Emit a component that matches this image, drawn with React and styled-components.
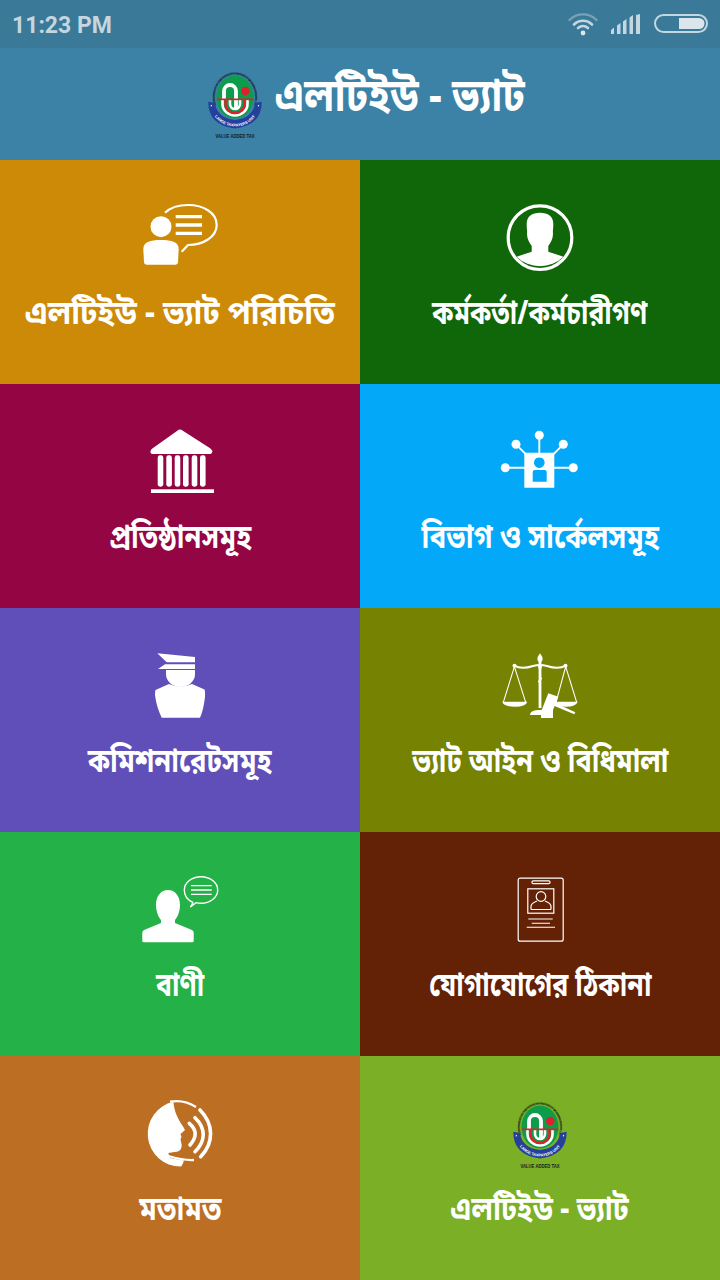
import React from 'react';
import styled, { createGlobalStyle } from 'styled-components';

const Global = createGlobalStyle`
  html, body { margin: 0; padding: 0; background: #3b82a6; }
  #root { width: 720px; height: 1280px; overflow: hidden; }
`;

const Page = styled.div`
  width: 720px;
  height: 1280px;
  display: flex;
  flex-direction: column;
  font-family: "Noto Sans Bengali", "Noto Serif Bengali", "Lohit Bengali", "Noto Sans", "Liberation Sans", sans-serif;
`;
const StatusBar = styled.div`
  height: 48px;
  flex: none;
  background: #3a7997;
  display: flex;
  align-items: center;
  justify-content: space-between;
  padding: 0 12px;
`;
const Time = styled.span`
  font: 700 23px/1 Roboto, sans-serif;
  color: #c4d6df;
  margin-top: 2px;
`;
const StatusIcons = styled.div`
  display: flex;
  align-items: center;
  gap: 13px;
`;
const AppBar = styled.header`
  height: 112px;
  flex: none;
  background: #3b82a6;
  display: flex;
  align-items: center;
  justify-content: center;
  gap: 10px;
  padding-left: 13px;
`;
const AppLogo = styled.div`
  display: flex;
  margin-top: 2px;
`;
const AppTitle = styled.h1`
  margin: 0 0 8px;
  width: 251px;
  font-size: 46px;
  line-height: 56px;
  font-weight: 700;
  color: #fff;
  white-space: nowrap;
  transform: scaleX(.865);
  transform-origin: left center;
`;
const Grid = styled.main`
  flex: 1;
  display: grid;
  grid-template-columns: 360px 360px;
  grid-auto-rows: 224px;
`;
const Tile = styled.a`
  background: ${p => p.$bg};
  display: flex;
  flex-direction: column;
  align-items: center;
  padding-top: 42px;
  box-sizing: border-box;
  color: #fff;
`;
const TileIcon = styled.svg`
  width: 80px;
  height: 70px;
  flex: none;
  display: block;
`;
const TileLabel = styled.span`
  margin-top: 22px;
  font-size: 33px;
  line-height: 44px;
  font-weight: 700;
  white-space: nowrap;
  transform: scaleX(${p => p.$fit});
`;

const Logo = ({ id }) => (
  <svg width="58" height="68" viewBox="0 0 58 68">
    <defs>
      <path id={id} d="M8.800 34 A20.500 22.500 0 1 1 47.200 34" />
      <path id={`${id}b`} d="M4 38 Q10 54.500 28 55.500 Q46 54.500 52 38" />
    </defs>
    <path d="M8.200 34 A21 24 0 1 1 47.800 34" fill="none" stroke="#10131f" strokeOpacity=".3" strokeWidth="2.200" />
    <text fontFamily="Liberation Sans, sans-serif" fontSize="2.400" fontWeight="700" fill="#10131f" letterSpacing=".08">
      <textPath href={`#${id}`}>GOVERNMENT OF THE PEOPLE'S REPUBLIC OF BANGLADESH</textPath>
    </text>
    <ellipse cx="28" cy="26" rx="18.500" ry="21.500" fill="#0c9c4a" />
    <path d="M15.500 28 V33 a12.500 11.500 0 0 0 25 0 V28" fill="none" stroke="#fff" strokeWidth="2.600" />
    <path d="M18.500 28 V33 a9.500 9 0 0 0 19 0 V28" fill="none" stroke="#e0212d" strokeWidth="2.400" />
    <path d="M23 28 V33 a5 5 0 0 0 10 0 V28" fill="none" stroke="#fff" strokeWidth="2.600" />
    <path d="M17 28 V20 a6 6 0 0 1 12 0 V37" fill="none" stroke="#fff" strokeWidth="3.800" />
    <circle cx="38.300" cy="20" r="4.300" fill="#e0212d" />
    <rect x="9.700" y="27.500" width="36.600" height="1.700" fill="#e0212d" />
    <path d="M1.300 30.700 L8 32 Q10 47 28 49 Q46 47 48 32 L54.700 30.700 Q55 54 28 57.500 Q1 54 1.300 30.700 Z" fill="#25409b" />
    <path d="M3.800 34.500l1 .4M51 34.500l1 .4" stroke="#fff" strokeWidth="1.500" />
    <text fontFamily="Liberation Sans, sans-serif" fontSize="3.800" fontWeight="700" fill="#fff" textAnchor="middle">
      <textPath href={`#${id}b`} startOffset="50%">LARGE TAXPAYERS UNIT</textPath>
    </text>
    <text x="28" y="67" textAnchor="middle" fontFamily="Liberation Sans, sans-serif" fontSize="5.200" fontWeight="700" fill="#141a20" textLength="39" lengthAdjust="spacingAndGlyphs">VALUE ADDED TAX</text>
  </svg>
);

const Speaker = () => (
  <TileIcon viewBox="0 0 80 70" fill="#fff">
    <circle cx="21" cy="24.700" r="10.500" />
    <path d="M3.300 47 C3.300 40 10 38 21 38 C32 38 38.700 40 38.700 47 L38 60 Q37.800 62.700 35 62.700 H7 Q4.200 62.700 4 60 Z" />
    <path d="M25 10.700 C31 5 40 3 48 3 C64 3 76.700 11 76.700 23 C76.700 35 63 43 48 43 L41.700 49.700" fill="none" stroke="#fff" strokeWidth="2.200" />
    <path d="M35.700 13h26.300v3.300H35.700zM35.700 21.300h26.300v3.400H35.700zM35.700 29.700h26.300V33H35.700z" />
  </TileIcon>
);
const Officer = () => (
  <TileIcon viewBox="0 0 80 70" fill="#fff">
    <circle cx="40" cy="35.700" r="31.800" fill="none" stroke="#fff" strokeWidth="3.200" />
    <path d="M26.700 22 C26.700 14 32 10.700 40 10.700 C48 10.700 53.300 14 53.300 22 C53.300 27 52.600 29 53 32 C53 37 50.500 41 48.300 44 V49.700 L63.400 54.700 A33.300 33.300 0 0 1 16.600 54.700 L31.700 49.700 V44 C29.500 41 27 37 27 32 C27.400 29 26.700 27 26.700 22 Z" />
  </TileIcon>
);
const Institution = () => (
  <TileIcon viewBox="0 0 80 70" fill="#fff">
    <path d="M38.700 3.800 Q40 3 41.300 3.800 L70.500 22.500 Q73 24.500 72 26.500 Q71.500 28 70 28 H12.500 Q10.500 28 10.400 26 Q10.400 24 12 22.800 Z" />
    {[17.700, 26.300, 34.700, 43, 51.700, 60].map(x => <rect key={x} x={x} y="29.300" width="5.600" height="31.400" rx="2.400" />)}
    <rect x="11" y="63.300" width="63" height="3.700" />
  </TileIcon>
);
const Network = () => (
  <TileIcon viewBox="0 0 80 70" fill="#fff">
    <path fillRule="evenodd" d="M24.300 26.700h30v35h-30z M39.300 31.400a5.300 5.300 0 1 0 .01 0z M32.700 46a2 2 0 0 1 2-2h10a2 2 0 0 1 2 2v9.700h-14z" />
    <path d="M39.300 9.300V28M16 18.300l10 10M63.300 18.300l-10 10M5.300 41.700h20M73.300 41.700h-20" stroke="#fff" strokeWidth="1.900" />
    {[[39.300, 9.300], [16, 18.300], [63.300, 18.300], [5.300, 41.700], [73.300, 41.700]].map(([x, y]) => <circle key={x} cx={x} cy={y} r="4.500" />)}
  </TileIcon>
);
const Commissioner = () => (
  <TileIcon viewBox="0 0 80 70" fill="#fff">
    <path d="M17.300 3.300 L55 7 V12.300 H26.700 Z" />
    <path d="M25 14.300 H55 V19 H18 Z" />
    <path d="M26 20 H55 V24 A14.500 13 0 0 1 26 24 Z" />
    <path d="M15.500 40 L29 34 Q40 39 52 34 L64.500 39.500 Q65.300 41 65 47 Q63.500 60 60 67.700 H21.700 Q16.500 57 15 45 Q15 41 15.500 40 Z" />
  </TileIcon>
);
const Scales = () => (
  <TileIcon viewBox="0 0 80 70" fill="#fff">
    <path d="M40 3.300 C42 6 43 8 42.500 10 Q42 12 40 12.500 Q38 12 37.500 10 C37 8 38 6 40 3.300 Z" />
    <path d="M14.300 15.700 C20 19 27 18 33 16 Q40 14 47 16 C53 18 60 19 65.600 15.700" fill="none" stroke="#fff" strokeWidth="2" />
    <circle cx="14.500" cy="15.700" r="2" /><circle cx="65.500" cy="15.700" r="2" />
    <path d="M38.600 12h2.800v3l.6 2-.6 2v8l.7 1.500-.7 1.500v28h-2.800V33l-.7-1.500.7-1.500v-11l-.6-2 .6-2z" />
    <path d="M14.400 16.700 L3.300 52.300 M14.400 16.700 L25.700 52.300 M65.700 16.700 L56 52.300 M65.700 16.700 L76.700 52.300" fill="none" stroke="#fff" strokeWidth="1.100" />
    <path d="M2.300 51.700 H27.300 Q26 56.700 14.800 56.700 Q3.600 56.700 2.300 51.700 Z" />
    <path d="M54 51.700 H77.700 Q76 56.700 65.800 56.700 Q56 56.700 54 51.700 Z" />
    <path d="M30 65 Q30 60.500 38 60 H53 V65 Z" />
    <rect x="41" y="65" width="12" height="3" />
    <path d="M48.300 43.300 L58.300 46.700 L51.700 63.300 L41.700 60 Z" />
    <path d="M53.300 52 L75.300 62.300 L74.300 64.300 L52 55 Z" />
  </TileIcon>
);
const Message = () => (
  <TileIcon viewBox="0 0 80 70" fill="#fff">
    <path d="M28 16 C35 16 40 22 40 31 C40 38 37 44 35 46 V49 L52 56 Q53.700 57 53.700 59 V67 Q53.700 68.300 52 68.300 H4 Q2.300 68.300 2.300 67 V59 Q2.300 57 4 56 L21 49 V46 C19 44 16 38 16 31 C16 22 21 16 28 16 Z" />
    <path d="M53 28.500 C47.500 26 44.300 21.500 44.300 16 C44.300 8.500 52 2.700 61 2.700 C70 2.700 77.700 8.500 77.700 16 C77.700 23.500 70 29.300 61 29.300 Q58 29.300 56 28.700 L50.700 32.700 Z" fill="none" stroke="#fff" strokeWidth="1.400" strokeLinejoin="round" />
    <path d="M51 11.700h20.700M51 16h20.700M51 20.300h20.700" stroke="#fff" strokeWidth="1.300" />
  </TileIcon>
);
const Card = () => (
  <TileIcon viewBox="0 0 80 70" fill="none" stroke="#fff" strokeWidth="1.200">
    <rect x="18.200" y="4.200" width="45" height="63" rx="2" />
    <rect x="32" y="6.800" width="18" height="2.800" rx="1.200" />
    <rect x="27.800" y="14.800" width="26" height="24.400" />
    <circle cx="41" cy="22.500" r="4.800" />
    <path d="M31 35.500 V32.500 C31 29 35 28 37 27 M51 35.500 V32.500 C51 29 47 28 45 27 M31 35.500 H51" />
    <path d="M28.300 45h24.400M31.700 49.300h18.300M26.700 53.300h28.300" strokeWidth="1.100" />
  </TileIcon>
);
const Voice = () => (
  <TileIcon viewBox="0 0 80 70" fill="#fff">
    <path d="M33.300 3.800 C34 9 35 14 37 18 C39 23 43 28 45 32 L40.500 36 L41.500 39 L40.500 41 L41.700 47 Q41.700 52 38 53.500 L28.300 55 L30 60 L44 62.500 Q42 68.600 40.500 68.600 A32.800 32.800 0 0 1 33.300 3.800 Z" />
    <path d="M30 3.600 C38 2.300 48 3.600 56 9" fill="none" stroke="#fff" strokeWidth="2.300" />
    <path d="M28.300 58 C35 60 42 62.500 54 62" fill="none" stroke="#fff" strokeWidth="2.300" />
    <path d="M60 12 C74 26 74 45 60.700 58.700" fill="none" stroke="#fff" strokeWidth="3.600" strokeLinecap="round" />
    <path d="M55 19.700 C66 30 66 43 55 53.700" fill="none" stroke="#fff" strokeWidth="3.600" strokeLinecap="round" />
    <path d="M49.300 25.300 C57 32 57 39 50 47" fill="none" stroke="#fff" strokeWidth="3.600" strokeLinecap="round" />
  </TileIcon>
);
const TileLogoSlot = styled.div`
  width: 80px;
  height: 70px;
  display: flex;
  justify-content: center;
  padding: 3px 0 0 2px;
  box-sizing: border-box;
  flex: none;
`;
const TileLogo = () => <TileLogoSlot><Logo id="ringTile" /></TileLogoSlot>;

const tiles = [
  ['এলটিইউ - ভ্যাট পরিচিতি', '#cc8a06', Speaker, 0.94],
  ['কর্মকর্তা/কর্মচারীগণ', '#106709', Officer, 0.8],
  ['প্রতিষ্ঠানসমূহ', '#940543', Institution, 0.83],
  ['বিভাগ ও সার্কেলসমূহ', '#03a8f9', Network, 0.84],
  ['কমিশনারেটসমূহ', '#604fb8', Commissioner, 0.83],
  ['ভ্যাট আইন ও বিধিমালা', '#758202', Scales, 0.82],
  ['বাণী', '#24b147', Message, 0.8],
  ['যোগাযোগের ঠিকানা', '#632105', Card, 0.81],
  ['মতামত', '#bc6e22', Voice, 0.85],
  ['এলটিইউ - ভ্যাট', '#7bb026', TileLogo, 0.86],
];

export default function App() {
  return (
    <Page>
      <Global />
      <StatusBar>
        <Time>11:23 PM</Time>
        <StatusIcons>
          <svg width="30" height="24" viewBox="0 0 30 24" fill="none" stroke="#c4d6df" strokeLinecap="round">
            <path d="M1.500 8 C9 0.500 21 0.500 28.500 8" strokeWidth="2.400" strokeOpacity=".45" />
            <path d="M6 12.500 C11 7.500 19 7.500 24 12.500" strokeWidth="2.600" />
            <path d="M10 16 C13 13.500 17 13.500 20 16" strokeWidth="2.600" />
            <circle cx="15" cy="21" r="2.400" fill="#dbe6ec" stroke="none" />
          </svg>
          <svg width="30" height="20" viewBox="0 0 30 20" fill="#c4d6df">
            <path d="M0 16l3-2.500V20H0zM6 11.500l3.500-2.500V20H6zM12 7.500L15.500 5V20H12zM18.500 3.500L22 1V20h-3.500zM25 1l4-1v20h-4z" />
          </svg>
          <svg width="54" height="20" viewBox="0 0 54 20">
            <rect x="1" y="1" width="52" height="17" rx="8.500" fill="none" stroke="#c4d6df" strokeWidth="2" />
            <path d="M25 4h20a5.500 5.500 0 0 1 0 11H25z" fill="#dbe6ec" />
          </svg>
        </StatusIcons>
      </StatusBar>
      <AppBar>
        <AppLogo><Logo id="ringHead" /></AppLogo>
        <AppTitle>এলটিইউ - ভ্যাট</AppTitle>
      </AppBar>
      <Grid>
        {tiles.map(([label, bg, Icon, fit]) => (
          <Tile key={label} $bg={bg}>
            <Icon />
            <TileLabel $fit={fit}>{label}</TileLabel>
          </Tile>
        ))}
      </Grid>
    </Page>
  );
}
